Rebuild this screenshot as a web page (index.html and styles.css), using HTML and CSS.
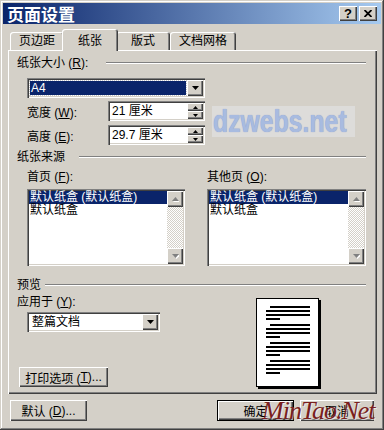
FILE: index.html
```html
<!DOCTYPE html>
<html>

<head>
    <title>页面设置</title>
    <meta charset="utf-8">
    <link rel="stylesheet" href="styles.css">
</head>

<body>
    <div class="window">
        <div class="titlebar">
            <span class="title">页面设置</span>
            <div class="cap-btns">
                <span class="cap-btn">?</span>
                <span class="cap-btn">
                    <svg width="8" height="7" viewBox="0 0 8 7"><path d="M0.5 0 L7.5 7 M7.5 0 L0.5 7" stroke="#000" stroke-width="1.8"/></svg>
                </span>
            </div>
        </div>

        <div class="tabs">
            <span class="tab t1">页边距</span>
            <span class="tab t2 active">纸张</span>
            <span class="tab t3">版式</span>
            <span class="tab t4">文档网格</span>
        </div>

        <div class="panel">
            <!-- paper size -->
            <div class="group-title sec-size">纸张大小 (<u>R</u>):</div>
            <div class="combo size-combo">
                <span class="value selected">A4</span>
                <span class="drop"><svg width="7" height="4" viewBox="0 0 7 4"><polygon points="0,0 7,0 3.5,4" fill="#000"/></svg></span>
            </div>
            <div class="field-row">
                <span class="field-label">宽度 (<u>W</u>):</span>
                <div class="spin-input">
                    <span class="text">21 厘米</span>
                    <span class="spinner">
                        <span><svg width="5" height="3" viewBox="0 0 5 3"><polygon points="2.5,0 5,3 0,3" fill="#000"/></svg></span>
                        <span><svg width="5" height="3" viewBox="0 0 5 3"><polygon points="0,0 5,0 2.5,3" fill="#000"/></svg></span>
                    </span>
                </div>
            </div>
            <div class="field-row second">
                <span class="field-label">高度 (<u>E</u>):</span>
                <div class="spin-input">
                    <span class="text">29.7 厘米</span>
                    <span class="spinner">
                        <span><svg width="5" height="3" viewBox="0 0 5 3"><polygon points="2.5,0 5,3 0,3" fill="#000"/></svg></span>
                        <span><svg width="5" height="3" viewBox="0 0 5 3"><polygon points="0,0 5,0 2.5,3" fill="#000"/></svg></span>
                    </span>
                </div>
            </div>

            <!-- paper source -->
            <div class="group-title sec-source">纸张来源</div>
            <div class="sources">
                <div class="source">
                    <div class="source-label">首页 (<u>F</u>):</div>
                    <div class="listbox">
                        <div class="items">
                            <div class="item sel">默认纸盒 (默认纸盒)</div>
                            <div class="item">默认纸盒</div>
                        </div>
                        <div class="scroll">
                            <span class="arrow"><svg width="7" height="5" viewBox="0 0 7 5"><polygon points="4.5,1 8,5 1,5" fill="#fff"/><polygon points="3.5,0 7,4 0,4" fill="#808080"/></svg></span>
                            <span class="track"></span>
                            <span class="arrow"><svg width="7" height="5" viewBox="0 0 7 5"><polygon points="1,1 8,1 4.5,5" fill="#fff"/><polygon points="0,0 7,0 3.5,4" fill="#808080"/></svg></span>
                        </div>
                    </div>
                </div>
                <div class="source wide">
                    <div class="source-label">其他页 (<u>O</u>):</div>
                    <div class="listbox">
                        <div class="items">
                            <div class="item sel">默认纸盒 (默认纸盒)</div>
                            <div class="item">默认纸盒</div>
                        </div>
                        <div class="scroll">
                            <span class="arrow"><svg width="7" height="5" viewBox="0 0 7 5"><polygon points="4.5,1 8,5 1,5" fill="#fff"/><polygon points="3.5,0 7,4 0,4" fill="#808080"/></svg></span>
                            <span class="track"></span>
                            <span class="arrow"><svg width="7" height="5" viewBox="0 0 7 5"><polygon points="1,1 8,1 4.5,5" fill="#fff"/><polygon points="0,0 7,0 3.5,4" fill="#808080"/></svg></span>
                        </div>
                    </div>
                </div>
            </div>

            <!-- preview -->
            <div class="group-title sec-preview">预览</div>
            <div class="preview">
                <div class="apply">
                    <div class="source-label">应用于 (<u>Y</u>):</div>
                    <div class="combo apply-combo">
                        <span class="value">整篇文档</span>
                        <span class="drop"><svg width="7" height="4" viewBox="0 0 7 4"><polygon points="0,0 7,0 3.5,4" fill="#000"/></svg></span>
                    </div>
                    <span class="btn print-btn">打印选项 (<u>T</u>)...</span>
                </div>
                <div class="page">
                    <div class="para"><i class="ln indent"></i><i class="ln"></i><i class="ln"></i><i class="ln short"></i></div>
                    <div class="para"><i class="ln indent"></i><i class="ln"></i><i class="ln"></i><i class="ln short"></i></div>
                    <div class="para"><i class="ln indent"></i><i class="ln"></i><i class="ln"></i><i class="ln short"></i></div>
                    <div class="para"><i class="ln indent"></i><i class="ln"></i><i class="ln"></i><i class="ln short"></i></div>
                </div>
            </div>
        </div>

        <div class="footer">
            <span class="btn default-btn">默认 (<u>D</u>)...</span>
            <span class="btn ok-btn">确定</span>
            <span class="btn cancel-btn">取消</span>
        </div>

        <div class="mark-dz"><span>dzwebs.net</span></div>
        <div class="mark-mt">MinTao.Net</div>
    </div>
</body>

</html>
```

FILE: styles.css
```css
body {
    margin: 0;
    font-family: "Liberation Sans", "Noto Sans CJK SC", sans-serif;
    font-size: 12px;
    color: #000;
    background-color: #d4d0c8;
}

u {
    text-decoration: underline;
}

.window {
    position: relative;
    width: 384px;
    height: 430px;
    box-sizing: border-box;
    padding: 3px;
    background-color: #d4d0c8;
    box-shadow: inset -1px -1px #404040, inset 1px 1px #d4d0c8, inset -2px -2px #808080, inset 2px 2px #fff;
    overflow: hidden;
}

/* title bar */
.titlebar {
    height: 21px;
    display: flex;
    align-items: center;
    justify-content: space-between;
    padding: 0 4px 0 4px;
    background: linear-gradient(to right, #0a246a, #a6caf0);
    color: #fff;
}

.title {
    font-family: "Noto Sans CJK SC", sans-serif;
    font-size: 17px;
    font-weight: bold;
    line-height: 21px;
}

.cap-btns {
    display: flex;
    gap: 2px;
}

.cap-btn {
    width: 18px;
    height: 15px;
    display: flex;
    align-items: center;
    justify-content: center;
    background-color: #d4d0c8;
    color: #000;
    font-family: "Liberation Sans", sans-serif;
    font-size: 13px;
    font-weight: bold;
    box-shadow: inset 1px 1px #fff, inset -1px -1px #404040, inset -2px -2px #808080;
}

/* tabs */
.tabs {
    display: flex;
    align-items: flex-end;
    height: 21px;
    margin-top: 5px;
    padding-left: 7px;
}

.tab {
    height: 18px;
    line-height: 19px;
    text-align: center;
    border-radius: 3px 3px 0 0;
    box-shadow: inset 1px 1px #fff, inset -1px 0 #404040, inset -2px 0 #808080;
}

.t1 { width: 54px; }
.t2 { width: 52px; }
.t3 { width: 54px; }
.t4 { width: 66px; }

.tab.active {
    position: relative;
    z-index: 1;
    width: 56px;
    height: 19px;
    padding-top: 3px;
    margin: 0 -2px -1px;
    background-color: #d4d0c8;
}

/* panel */
.panel {
    height: 344px;
    box-sizing: border-box;
    margin: 0 4px 0 5px;
    padding: 6px 11px 0 9px;
    box-shadow: inset 1px 1px #fff, inset -1px -1px #404040, inset -2px -2px #808080;
}

.group-title {
    display: flex;
    align-items: center;
    height: 14px;
    line-height: 14px;
    white-space: nowrap;
}

.group-title::after {
    content: "";
    flex: 1;
    border-top: 1px solid #808080;
    border-bottom: 1px solid #fff;
    margin-left: 8px;
}

.sec-size::after { margin-left: 18px; }
.sec-source { margin-top: 5px; }
.sec-source::after { margin-left: 14px; }
.sec-preview { margin-top: 12px; }
.sec-preview::after { margin-left: 4px; }

/* combo boxes */
.combo {
    display: flex;
    height: 20px;
    box-sizing: border-box;
    padding: 2px;
    background-color: #fff;
    box-shadow: inset 1px 1px #808080, inset 2px 2px #404040, inset -1px -1px #fff, inset -2px -2px #d4d0c8;
}

.size-combo {
    width: 178px;
    margin: 8px 0 0 10px;
}

.apply-combo {
    width: 133px;
    margin: 3px 0 0 10px;
}

.combo .value {
    flex: 1;
    line-height: 16px;
    padding-left: 3px;
}

.combo .value.selected {
    margin: 1px;
    padding-left: 1px;
    line-height: 14px;
    background-color: #0a246a;
    color: #fff;
    outline: 1px dotted #c8c8c8;
}

.drop {
    width: 16px;
    height: 16px;
    display: flex;
    align-items: center;
    justify-content: center;
    background-color: #d4d0c8;
    box-shadow: inset 1px 1px #fff, inset -1px -1px #404040, inset -2px -2px #808080;
}

/* width / height fields */
.field-row {
    display: flex;
    align-items: center;
    margin: 3px 0 0 10px;
}

.field-row.second {
    margin-top: 4px;
}

.field-label {
    width: 81px;
}

.spin-input {
    display: flex;
    width: 97px;
    height: 20px;
    box-sizing: border-box;
    padding: 2px;
    background-color: #fff;
    box-shadow: inset 1px 1px #808080, inset 2px 2px #404040, inset -1px -1px #fff, inset -2px -2px #d4d0c8;
}

.spin-input .text {
    flex: 1;
    padding-left: 2px;
    line-height: 16px;
}

.spinner {
    width: 16px;
    display: flex;
    flex-direction: column;
}

.spinner span {
    flex: 1;
    display: flex;
    align-items: center;
    justify-content: center;
    background-color: #d4d0c8;
    box-shadow: inset 1px 1px #fff, inset -1px -1px #404040, inset -2px -2px #808080;
}

/* paper source lists */
.sources {
    display: flex;
    gap: 22px;
    margin: 6px 0 0 10px;
}

.source {
    width: 158px;
}

.source.wide {
    width: 159px;
}

.source-label {
    height: 14px;
    line-height: 14px;
}

.listbox {
    display: flex;
    height: 77px;
    box-sizing: border-box;
    margin-top: 5px;
    padding: 2px;
    background-color: #fff;
    box-shadow: inset 1px 1px #808080, inset 2px 2px #404040, inset -1px -1px #fff, inset -2px -2px #d4d0c8;
}

.items {
    flex: 1;
}

.item {
    height: 13px;
    line-height: 13px;
    padding-left: 1px;
    white-space: nowrap;
}

.item.sel {
    background-color: #0a246a;
    color: #fff;
}

.scroll {
    width: 16px;
    display: flex;
    flex-direction: column;
    background: conic-gradient(#fff 25%, #d4d0c8 0 50%, #fff 0 75%, #d4d0c8 0) 0 0 / 2px 2px;
}

.scroll .arrow {
    height: 16px;
    display: flex;
    align-items: center;
    justify-content: center;
    background-color: #d4d0c8;
    box-shadow: inset 1px 1px #fff, inset -1px -1px #404040, inset -2px -2px #808080;
}

.scroll .track {
    flex: 1;
}

/* preview */
.preview {
    display: flex;
}

.apply {
    width: 239px;
    padding-top: 3px;
}

.page {
    width: 63px;
    height: 89px;
    box-sizing: border-box;
    margin-top: 6px;
    padding: 7px 8px 0 9px;
    border: 1px solid #000;
    background-color: #fff;
    box-shadow: 2px 2px 0 #000;
}

.para {
    margin-bottom: 4px;
}

.ln {
    display: block;
    height: 2px;
    margin-bottom: 2px;
    background-color: #000;
}

.ln.indent {
    margin-left: 4px;
}

.ln.short {
    width: 14px;
}

/* buttons */
.btn {
    display: flex;
    align-items: center;
    justify-content: center;
    height: 21px;
    box-sizing: border-box;
    background-color: #d4d0c8;
    white-space: nowrap;
    box-shadow: inset 1px 1px #fff, inset -1px -1px #404040, inset -2px -2px #808080;
}

.print-btn {
    width: 89px;
    height: 20px;
    margin: 35px 0 0 2px;
}

.footer {
    display: flex;
    margin: 6px 7px 0 7px;
}

.default-btn {
    width: 77px;
}

.ok-btn {
    width: 77px;
    margin-left: auto;
    border: 1px solid #000;
}

.cancel-btn {
    width: 74px;
    margin-left: 6px;
}

/* watermarks */
.mark-dz {
    position: absolute;
    left: 212px;
    top: 106px;
    width: 143px;
    height: 31px;
    background-color: #dddcda;
}

.mark-dz span {
    display: block;
    margin-left: 1px;
    font-family: "Liberation Sans", sans-serif;
    font-size: 31px;
    font-weight: bold;
    line-height: 31px;
    color: #a8bbe0;
    text-shadow: 0 0 1px #8094c8;
    transform: scaleX(0.8);
    transform-origin: left center;
}

.mark-mt {
    position: absolute;
    left: 262px;
    top: 398px;
    font-family: "Liberation Serif", serif;
    font-size: 26px;
    font-style: italic;
    line-height: 26px;
    letter-spacing: -1px;
    color: #7a1e1e;
    text-shadow: 1px 1px 0 rgba(255, 255, 255, 0.6);
}
```
